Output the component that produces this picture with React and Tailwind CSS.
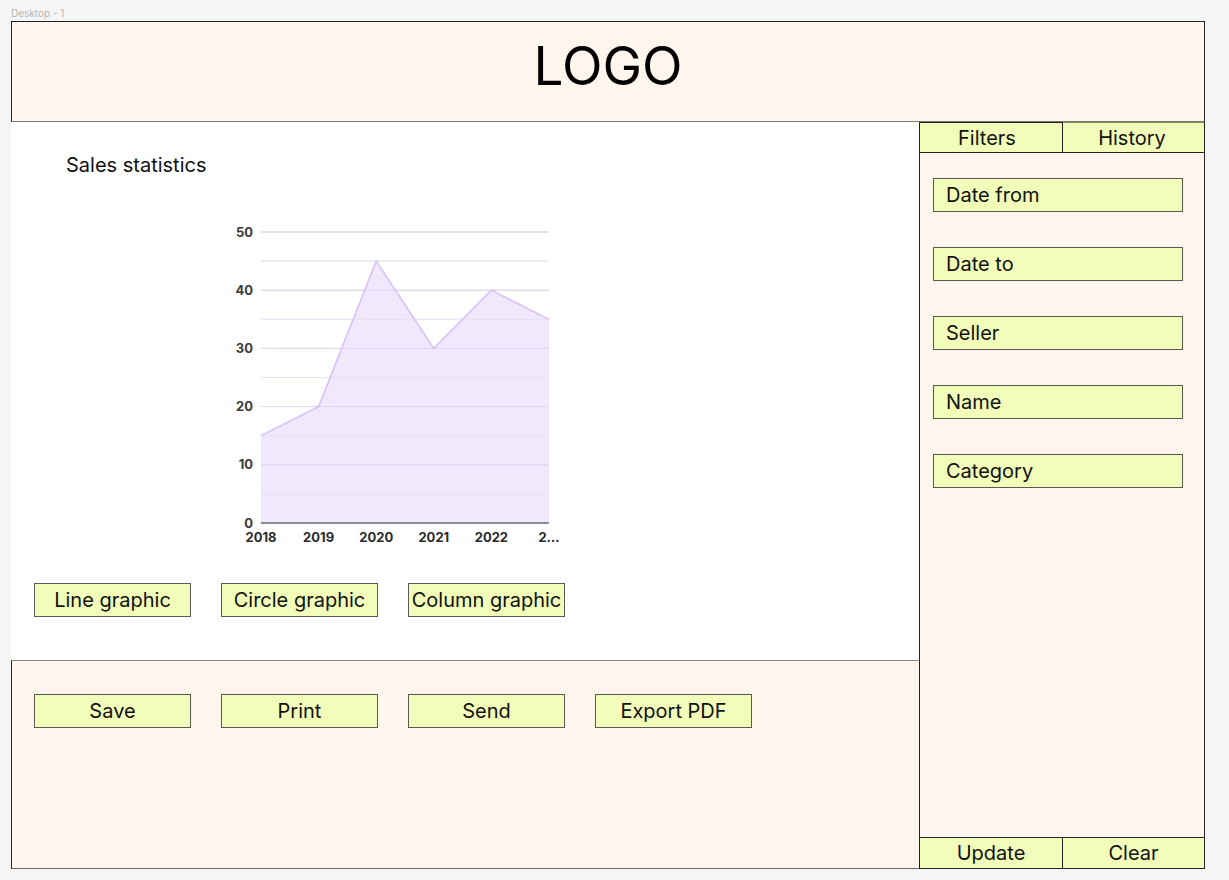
import React from 'react'

// Yearly sales values shown in the area chart
const SALES = [
  { year: '2018', value: 15 },
  { year: '2019', value: 20 },
  { year: '2020', value: 45 },
  { year: '2021', value: 30 },
  { year: '2022', value: 40 },
  { year: '2023', value: 35 },
]

const FILTERS = ['Date from', 'Date to', 'Seller', 'Name', 'Category']

// Chart geometry inside the svg box
const X0 = 36
const X1 = 324
const Y0 = 302
const Y50 = 11

const px = (i) => X0 + (i * (X1 - X0)) / (SALES.length - 1)
const py = (v) => Y0 - (v / 50) * (Y0 - Y50)

function SalesChart() {
  const pts = SALES.map((d, i) => `${px(i)},${py(d.value)}`).join(' ')
  const area = `${X0},${Y0} ${pts} ${X1},${Y0}`
  const grid = [5, 10, 15, 20, 25, 30, 35, 40, 45, 50]

  return (
    <svg width="340" height="330" className="block" style={{ fontFamily: 'Inter, sans-serif' }}>
      {grid.map(g => (
        <line
          key={g}
          x1={X0} x2={X1} y1={py(g)} y2={py(g)}
          stroke={g % 10 === 0 ? '#e2e2e4' : '#f0f0f2'}
          strokeWidth="1"
        />
      ))}
      <polygon points={area} fill="#f0e8fc" />
      {grid.map(g => (
        <line
          key={'o' + g}
          x1={X0} x2={X1} y1={py(g)} y2={py(g)}
          stroke={g % 10 === 0 ? '#ddd4ee' : '#e8e0f6'}
          strokeWidth="1"
        />
      ))}
      <polyline points={pts} fill="none" stroke="#d9bff7" strokeWidth="1.5" />
      <line x1={X0} x2={X1} y1={Y0} y2={Y0} stroke="#6b6b70" strokeWidth="1.5" />
      {[0, 10, 20, 30, 40, 50].map(v => (
        <text key={v} x={28} y={py(v) + 4.5} textAnchor="end" fontSize="13" fontWeight="700" fill="#3a3a3c">
          {v}
        </text>
      ))}
      {SALES.map((d, i) => (
        <text key={d.year} x={px(i)} y={321} textAnchor="middle" fontSize="13" fontWeight="700" fill="#2a2a2c">
          {i === SALES.length - 1 ? '2…' : d.year}
        </text>
      ))}
    </svg>
  )
}

function Btn({ children, className = '' }) {
  return (
    <div className={`w-[157px] h-[34px] flex items-center justify-center bg-[#f1fdb8] border border-[#5a5a52] text-[20px] leading-none text-[#111] ${className}`}>
      {children}
    </div>
  )
}

export default function App() {
  return (
    <div className="w-[1229px] h-[880px] bg-[#f5f5f5] relative overflow-hidden" style={{ fontFamily: 'Inter, "Noto Sans", sans-serif' }}>
      <div className="absolute left-[11px] top-[6px] text-[10px] text-[#b5b5b5]">Desktop - 1</div>

      <div className="absolute left-[11px] top-[21px] w-[1194px] h-[848px] flex flex-col">
        {/* header */}
        <header className="h-[101px] shrink-0 bg-[#fef5ec] border border-[#222] border-b-[#7a7a72] flex items-center justify-center pb-[10px]">
          <span className="text-[53px] leading-none text-black">LOGO</span>
        </header>

        <div className="flex flex-1 min-h-0">
          {/* main column */}
          <div className="w-[908px] shrink-0 flex flex-col">
            <section className="h-[538px] bg-white pt-[31px] flex flex-col">
              <h2 className="ml-[55px] text-[20px] leading-[24px] text-[#111]">Sales statistics</h2>
              <div className="ml-[214px] mt-[44px]">
                <SalesChart />
              </div>
              <div className="ml-[23px] mt-[32px] flex gap-[30px]">
                <Btn className="h-[33px]">Line graphic</Btn>
                <Btn className="h-[33px]">Circle graphic</Btn>
                <Btn className="h-[33px]">Column graphic</Btn>
              </div>
            </section>
            <section className="flex-1 bg-[#fef5ec] border-t border-t-[#8a8a82] border-l border-l-[#222] border-b border-b-[#6a6a66] pt-[33px] pl-[22px]">
              <div className="flex gap-[30px]">
                <Btn>Save</Btn>
                <Btn>Print</Btn>
                <Btn>Send</Btn>
                <Btn>Export PDF</Btn>
              </div>
            </section>
          </div>

          {/* filter sidebar */}
          <aside className="flex-1 bg-[#fef5ec] border-l border-r border-b border-[#222] flex flex-col">
            <div className="h-[31px] flex bg-[#f1fdb8] border-b border-[#222] text-[20px] text-[#111]">
              <div className="w-[143px] shrink-0 flex items-center justify-center pr-[8px] border-r border-[#222] border-t">Filters</div>
              <div className="flex-1 flex items-center justify-center pr-[3px] border-t border-t-[#8a8a5a]">History</div>
            </div>
            <div className="flex-1 pt-[25px] pl-[13px] flex flex-col gap-[35px]">
              {FILTERS.map(f => (
                <div key={f} className="w-[250px] h-[34px] bg-[#f1fdb8] border border-[#5a5a52] flex items-center pl-[12px] text-[20px] leading-none text-[#111]">
                  {f}
                </div>
              ))}
            </div>
            <div className="h-[31px] flex bg-[#f1fdb8] border-t border-[#222] text-[20px] text-[#111]">
              <div className="w-[143px] shrink-0 flex items-center justify-center border-r border-[#222]">Update</div>
              <div className="flex-1 flex items-center justify-center">Clear</div>
            </div>
          </aside>
        </div>
      </div>
    </div>
  )
}
